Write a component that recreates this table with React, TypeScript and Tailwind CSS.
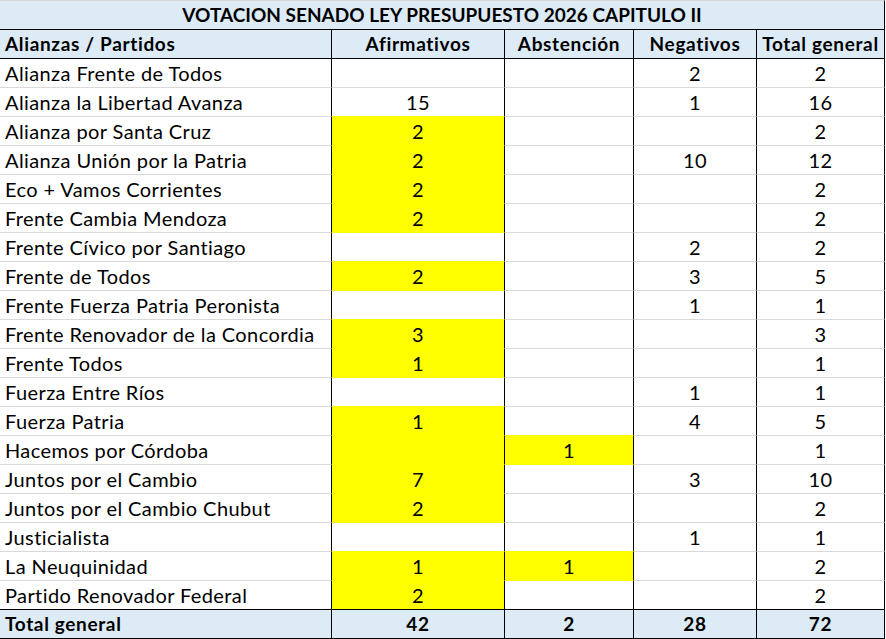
import React from "react";

type Row = {
  name: string;
  afirm?: number;
  abst?: number;
  neg?: number;
  total: number;
  yAfirm?: boolean;
  yAbst?: boolean;
};

const rows: Row[] = [
  { name: "Alianza Frente de Todos", neg: 2, total: 2 },
  { name: "Alianza la Libertad Avanza", afirm: 15, neg: 1, total: 16 },
  { name: "Alianza por Santa Cruz", afirm: 2, total: 2, yAfirm: true },
  { name: "Alianza Unión por la Patria", afirm: 2, neg: 10, total: 12, yAfirm: true },
  { name: "Eco + Vamos Corrientes", afirm: 2, total: 2, yAfirm: true },
  { name: "Frente Cambia Mendoza", afirm: 2, total: 2, yAfirm: true },
  { name: "Frente Cívico por Santiago", neg: 2, total: 2 },
  { name: "Frente de Todos", afirm: 2, neg: 3, total: 5, yAfirm: true },
  { name: "Frente Fuerza Patria Peronista", neg: 1, total: 1 },
  { name: "Frente Renovador de la Concordia", afirm: 3, total: 3, yAfirm: true },
  { name: "Frente Todos", afirm: 1, total: 1, yAfirm: true },
  { name: "Fuerza Entre Ríos", neg: 1, total: 1 },
  { name: "Fuerza Patria", afirm: 1, neg: 4, total: 5, yAfirm: true },
  { name: "Hacemos por Córdoba", abst: 1, total: 1, yAfirm: true, yAbst: true },
  { name: "Juntos por el Cambio", afirm: 7, neg: 3, total: 10, yAfirm: true },
  { name: "Juntos por el Cambio Chubut", afirm: 2, total: 2, yAfirm: true },
  { name: "Justicialista", neg: 1, total: 1 },
  { name: "La Neuquinidad", afirm: 1, abst: 1, total: 2, yAfirm: true, yAbst: true },
  { name: "Partido Renovador Federal", afirm: 2, total: 2, yAfirm: true },
];

const font = { fontFamily: "Lato, 'Liberation Sans', sans-serif" };

function Cell({
  children,
  yellow,
  bottom,
  left,
}: {
  children?: React.ReactNode;
  yellow?: boolean;
  bottom: "gray" | "yellow" | "black";
  left?: boolean;
}) {
  const bg = yellow ? "bg-[#ffff00]" : "bg-white";
  const bb =
    bottom === "black"
      ? "border-b-black"
      : bottom === "yellow"
      ? "border-b-[#ffff00]"
      : "border-b-[#d9d9d9]";
  return (
    <div
      className={`flex h-[29px] items-end border-b border-r border-r-black pb-[2px] text-[20px] leading-[23px] tracking-[0.4px] ${bb} ${bg} ${
        left ? "justify-start pl-[5px]" : "justify-center"
      }`}
    >
      {children}
    </div>
  );
}

function BoldRow({ cells }: { cells: string[] }) {
  return (
    <div className="grid grid-cols-[332px_173px_129px_123px_128px] bg-[#ddebf7] font-bold">
      {cells.map((h, i) => (
        <div
          key={i}
          className={`flex h-[29px] items-end border-b border-r border-black pb-[3px] text-[19px] leading-[22px] tracking-[0.65px] ${
            i === 0 ? "justify-start pl-[5px]" : "justify-center"
          }`}
        >
          {h}
        </div>
      ))}
    </div>
  );
}

export default function App() {
  return (
    <div className="h-[639px] w-[886px] bg-white text-black" style={font}>
      <div className="w-[885px]">
        <div className="flex h-[30px] items-end justify-center border-b border-r border-t border-b-black border-r-black border-t-[#d9d9d9] bg-[#ddebf7] pb-[3px] text-[19px] font-bold leading-[22px]">
          VOTACION SENADO LEY PRESUPUESTO 2026 CAPITULO II
        </div>
        <BoldRow cells={["Alianzas / Partidos", "Afirmativos", "Abstención", "Negativos", "Total general"]} />
        {rows.map((r, i) => {
          const next = rows[i + 1];
          const last = i === rows.length - 1;
          const b = (y?: boolean, ny?: boolean): "gray" | "yellow" | "black" =>
            last ? "black" : y || ny ? "yellow" : "gray";
          return (
            <div key={r.name} className="grid grid-cols-[332px_173px_129px_123px_128px]">
              <Cell left bottom={last ? "black" : "gray"}>
                {r.name}
              </Cell>
              <Cell yellow={r.yAfirm} bottom={b(r.yAfirm, next?.yAfirm)}>
                {r.afirm}
              </Cell>
              <Cell yellow={r.yAbst} bottom={b(r.yAbst, next?.yAbst)}>
                {r.abst}
              </Cell>
              <Cell bottom={last ? "black" : "gray"}>{r.neg}</Cell>
              <Cell bottom={last ? "black" : "gray"}>{r.total}</Cell>
            </div>
          );
        })}
        <BoldRow cells={["Total general", "42", "2", "28", "72"]} />
      </div>
    </div>
  );
}
